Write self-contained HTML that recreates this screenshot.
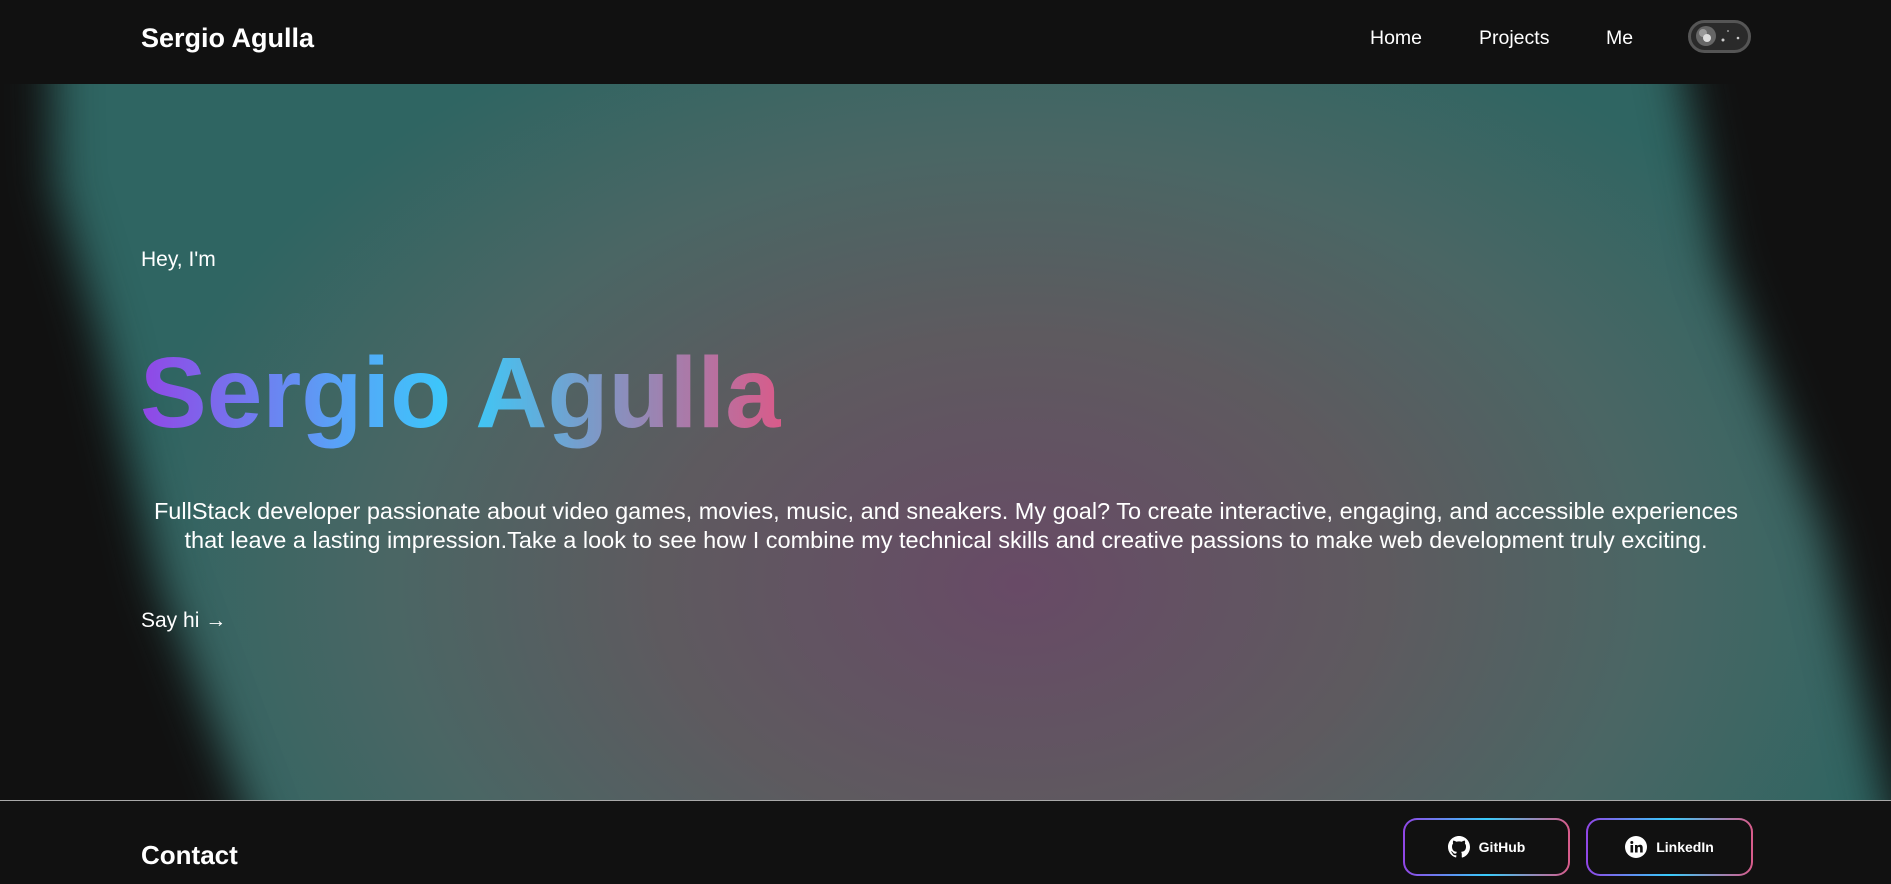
<!DOCTYPE html>
<html><head><meta charset="utf-8"><style>
*{margin:0;padding:0;box-sizing:border-box}
body{width:1891px;height:884px;background:#111;font-family:"Liberation Sans",Arial,sans-serif;color:#fff;overflow:hidden;position:relative}
header{position:absolute;top:0;left:0;width:1891px;height:84px;background:#111;z-index:2}
.logo{position:absolute;left:141px;top:23px;font-size:27px;font-weight:bold}
nav a{position:absolute;top:27px;font-size:19.5px;color:#fff;text-decoration:none}
.tog{position:absolute;left:1688px;top:20px;width:63px;height:33px;border:3px solid #555;border-radius:17px;background:#2a2a2a}
.hero{position:absolute;top:84px;left:0;width:1891px;height:717px;overflow:hidden;
background:radial-gradient(ellipse 900px 620px at 1020px 500px,#684a66 0%,#5e5a5f 40%,#4a6664 70%,#2f6562 100%)}
.hero svg{position:absolute;left:-100px;top:-100px;filter:blur(22px)}
.hey{position:absolute;left:141px;top:164px;font-size:21px}
.name{position:absolute;left:140px;top:252px;font-size:100px;font-weight:bold;
background:linear-gradient(90deg,#9146e6 0%,#5aa0f6 30%,#38ccfb 50%,#8a8fbd 75%,#d95b8a 100%);-webkit-background-clip:text;background-clip:text;color:transparent}
.desc{position:absolute;left:90px;width:1712px;top:413px;font-size:23.5px;line-height:29px;text-align:center;white-space:nowrap}
.say{position:absolute;left:141px;top:525px;font-size:21px}
.line{position:absolute;top:800px;left:0;width:1891px;height:1px;background:#aaa}
.contact{position:absolute;left:141px;top:840px;font-size:26px;font-weight:bold}
.btn{position:absolute;top:818px;width:167px;height:58px;border-radius:14px;padding:2px;background:linear-gradient(90deg,#9146e6,#38ccfb 50%,#d95b8a)}
.btn div{width:100%;height:100%;background:#111;border-radius:12px;display:flex;align-items:center;justify-content:center;font-size:14px;font-weight:bold;gap:9px}
</style></head><body>
<header>
<div class="logo">Sergio Agulla</div>
<nav><a style="left:1370px">Home</a><a style="left:1479px">Projects</a><a style="left:1606px">Me</a></nav>
<div class="tog"><svg width="57" height="27"><circle cx="15" cy="13" r="10" fill="#666"/><circle cx="12" cy="10" r="4" fill="#999"/><circle cx="16" cy="15" r="4" fill="#ddd"/><circle cx="32" cy="17" r="1.5" fill="#ccc"/><circle cx="37" cy="8" r="1" fill="#999"/><circle cx="47" cy="15" r="1.3" fill="#ccc"/></svg></div>
</header>
<div class="hero">
<svg width="2091" height="917">
<polygon points="0,0 150,0 155,200 200,350 260,600 380,917 0,917" fill="#111"/>
<polygon points="1765,0 2091,0 2091,917 2010,917 1925,550 1820,280" fill="#111"/>
</svg>
<div class="hey">Hey, I'm</div>
<div class="name">Sergio Agulla</div>
<div class="desc">FullStack developer passionate about video games, movies, music, and sneakers. My goal? To create interactive, engaging, and accessible experiences<br>that leave a lasting impression.Take a look to see how I combine my technical skills and creative passions to make web development truly exciting.</div>
<div class="say">Say hi →</div>
</div>
<div class="line"></div>
<div class="contact">Contact</div>
<div class="btn" style="left:1403px"><div><svg width="22" height="22" viewBox="0 0 16 16"><path fill="#fff" d="M8 0C3.58 0 0 3.58 0 8c0 3.54 2.29 6.53 5.47 7.59.4.07.55-.17.55-.38v-1.33c-2.23.48-2.7-1.07-2.7-1.07-.36-.92-.89-1.17-.89-1.17-.73-.5.06-.49.06-.49.8.06 1.23.83 1.23.83.71 1.23 1.87.87 2.33.66.07-.52.28-.87.51-1.07-1.78-.2-3.64-.89-3.64-3.95 0-.87.31-1.59.82-2.15-.08-.2-.36-1.02.08-2.12 0 0 .67-.21 2.2.82a7.6 7.6 0 0 1 4 0c1.53-1.04 2.2-.82 2.2-.82.44 1.1.16 1.92.08 2.12.51.56.82 1.27.82 2.15 0 3.07-1.87 3.75-3.65 3.95.29.25.54.73.54 1.48v2.2c0 .21.15.46.55.38A8 8 0 0 0 16 8c0-4.42-3.58-8-8-8z"/></svg>GitHub</div></div>
<div class="btn" style="left:1586px"><div><svg width="22" height="22" viewBox="0 0 22 22"><circle cx="11" cy="11" r="11" fill="#fff"/><rect x="5.5" y="9" width="2.6" height="7.5" fill="#111"/><circle cx="6.8" cy="6.5" r="1.5" fill="#111"/><path d="M10 9h2.5v1.2c.5-.9 1.5-1.4 2.6-1.4 2 0 2.6 1.3 2.6 3.2v4.5h-2.6v-4c0-1-.3-1.6-1.2-1.6s-1.3.7-1.3 1.6v4H10z" fill="#111"/></svg>LinkedIn</div></div>
</body></html>
